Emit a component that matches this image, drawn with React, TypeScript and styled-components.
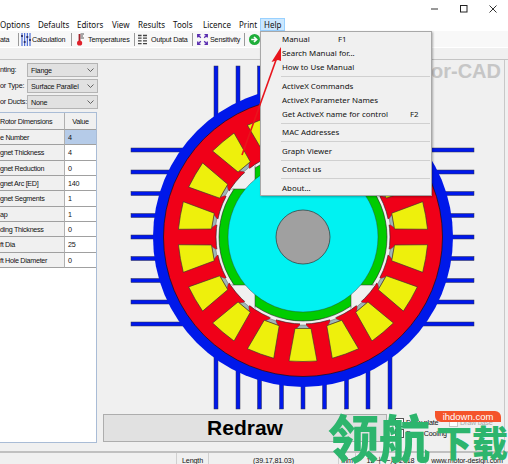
import React from "react";
import styled, { createGlobalStyle } from "styled-components";

const GlobalStyle = createGlobalStyle`
  html, body {
    margin: 0;
    padding: 0;
    background: #fff;
  }
`;

const menuFont = `"Noto Sans", "Liberation Sans", sans-serif`;
const uiFont = `"Liberation Sans", "Noto Sans CJK SC", sans-serif`;

const menus = [
  ["Options", 38],
  ["Defaults", 39],
  ["Editors", 35],
  ["View", 26],
  ["Results", 35],
  ["Tools", 30],
  ["Licence", 36],
  ["Print", 21],
] as const;

const rotorRows = [
  ["e Number", "4"],
  ["gnet Thickness", "4"],
  ["gnet Reduction", "0"],
  ["gnet Arc [ED]", "140"],
  ["gnet Segments", "1"],
  ["ap", "1"],
  ["ding Thickness", "0"],
  ["ft Dia", "25"],
  ["ft Hole Diameter", "0"],
];

const helpItems: { label: string; key?: string; keyAt?: number; gap: number }[] = [
  { label: "Manual", key: "F1", keyAt: 77, gap: 0 },
  { label: "Search Manual for...", gap: 0 },
  { label: "How to Use Manual", gap: 0 },
  { label: "ActiveX Commands", gap: 1 },
  { label: "ActiveX Parameter Names", gap: 0 },
  { label: "Get ActiveX name for control", key: "F2", keyAt: 149, gap: 0 },
  { label: "MAC Addresses", gap: 1 },
  { label: "Graph Viewer", gap: 1 },
  { label: "Contact us", gap: 1 },
  { label: "About...", gap: 1 },
];

const CX = 303;
const CY = 237;
const FIN_OFFSETS = [-87, -65, -43.5, -21.5, 0, 21.5, 43.5, 65, 87];
const SLOT_ANGLES = Array.from({ length: 18 }, (_, i) => i * 20);
const BG = "#f0f0f0";

const MotorDrawing = () => (
  <MotorSvg viewBox="97 60 408 350" width={408} height={350}>
    <defs>
      <clipPath id="gapClip">
        <circle cx={CX} cy={CY} r={86} />
      </clipPath>
    </defs>
    {FIN_OFFSETS.map((o) => (
      <g key={o} fill="#0018ea" stroke="#30304a" strokeWidth={0.5}>
        <rect x={CX + o - 2} y={66} width={4} height={343} />
        <rect x={131} y={CY + o - 2} width={343} height={4} />
      </g>
    ))}
    <circle cx={CX} cy={CY} r={150} fill="#0018ea" />
    <circle cx={CX} cy={CY} r={139.5} fill="#f00018" stroke="#111" strokeWidth={0.7} />
    <circle cx={CX} cy={CY} r={87} fill={BG} stroke="#222" strokeWidth={0.6} />
    {SLOT_ANGLES.map((a) => (
      <g key={a} transform={`rotate(${a} ${CX} ${CY}) translate(${CX} ${CY})`}>
        <path d="M-3 85.5 L3 85.5 L3 88.5 L-3 88.5 Z" fill={BG} />
        <path d="M-3 88 L3 88 L6.5 91.5 L-6.5 91.5 Z" fill="#9fb6b8" stroke="#555" strokeWidth={0.4} />
        <path
          d="M-8 91.5 L8 91.5 L14 124 Q0 125 -14 124 Z"
          fill="#eef00c"
          stroke="#333"
          strokeWidth={0.6}
        />
      </g>
    ))}
    <circle cx={CX} cy={CY} r={84} fill="#00cc00" stroke="#222" strokeWidth={0.6} />
    <g clipPath="url(#gapClip)" fill={BG} stroke="#333" strokeWidth={0.5}>
      <rect x={CX + 48} y={CY + 48} width={50} height={50} />
      <rect x={CX - 98} y={CY + 48} width={50} height={50} />
      <rect x={CX - 98} y={CY - 98} width={50} height={50} />
      <rect x={CX + 48} y={CY - 98} width={50} height={50} />
    </g>
    <circle cx={CX} cy={CY} r={75} fill="#00f2f2" stroke="#333" strokeWidth={0.4} />
    <circle cx={CX} cy={CY} r={27} fill="#a0a0a0" stroke="#333" strokeWidth={0.7} />
  </MotorSvg>
);

const CalcIcon = () => (
  <svg width={10} height={13} viewBox="0 0 10 13">
    <path d="M1 0v13M3.7 0v13M6.3 0v13M9 0v13" stroke="#2a52d0" strokeWidth={1} fill="none" />
    <path d="M0 3h2M2.7 9h2M5.3 4h2M8 7h2" stroke="#1a1a50" strokeWidth={1.6} fill="none" />
  </svg>
);

const ThermoIcon = () => (
  <svg width={7} height={13} viewBox="0 0 7 13">
    <path d="M2.5 1v7" stroke="#a02028" strokeWidth={1.8} fill="none" />
    <path d="M3.5 1h3.5M3.5 3h2.5M3.5 5h3.5" stroke="#444" strokeWidth={0.9} fill="none" />
    <circle cx={2.6} cy={10} r={2.6} fill="#e0202a" />
  </svg>
);

const GridIcon = () => (
  <svg width={9} height={11} viewBox="0 0 9 11">
    <path d="M0 1.5h3.6M5 1.5h4M0 4.2h3.6M5 4.2h4M0 6.9h3.6M5 6.9h4M0 9.6h3.6M5 9.6h4" stroke="#444" strokeWidth={1.3} fill="none" />
  </svg>
);

const SensitivityIcon = () => (
  <svg width={11} height={11} viewBox="0 0 11 11">
    <g stroke="#5b2fb0" strokeWidth={1.3} fill="none">
      <path d="M0.7 3.5v-2.8h2.8M1 1l2.8 2.8M10.3 3.5v-2.8h-2.8M10 1L7.2 3.8M0.7 7.5v2.8h2.8M1 10l2.8-2.8M10.3 7.5v2.8h-2.8M10 10L7.2 7.2" />
    </g>
  </svg>
);

const GoIcon = () => (
  <svg width={11} height={11} viewBox="0 0 11 11">
    <circle cx={5.5} cy={5.5} r={5.5} fill="#1fae3a" />
    <path d="M2.2 5.5h4.6M5 3l2.6 2.5L5 8" stroke="#fff" strokeWidth={1.7} fill="none" />
  </svg>
);

const Chevron = () => (
  <svg width={7} height={4} viewBox="0 0 7 4">
    <path d="M0.5 0.5L3.5 3.5 6.5 0.5" stroke="#555" strokeWidth={0.9} fill="none" />
  </svg>
);

const App = () => (
  <>
    <GlobalStyle />
    <Screen>
      <TitleBar>
        <WinButton>
          <svg width={8} height={8} viewBox="0 0 8 8"><path d="M0 4h7" stroke="#333" /></svg>
        </WinButton>
        <WinButton>
          <svg width={8} height={8} viewBox="0 0 8 8"><rect x={0.5} y={0.5} width={6.5} height={6.5} fill="none" stroke="#222" /></svg>
        </WinButton>
        <WinButton>
          <svg width={8} height={8} viewBox="0 0 8 8"><path d="M0.5 0.5l7 7M7.5 0.5l-7 7" stroke="#333" fill="none" /></svg>
        </WinButton>
      </TitleBar>

      <MenuBar>
        {menus.map(([label, width]) => (
          <MenuLabel key={label} $width={width}>{label}</MenuLabel>
        ))}
        <HelpLabel>Help</HelpLabel>
      </MenuBar>

      <Toolbar>
        <ToolTab $width={19} $pad={0} $gap={0}>ata</ToolTab>
        <ToolTab $width={53} $pad={2} $gap={1}><CalcIcon />Calculation</ToolTab>
        <ToolTab $width={63} $pad={5} $gap={4}><ThermoIcon />Temperatures</ToolTab>
        <ToolTab $width={58} $pad={3} $gap={4}><GridIcon />Output Data</ToolTab>
        <ToolTab $width={52} $pad={4} $gap={2}><SensitivityIcon />Sensitivity</ToolTab>
        <ToolTab $width={18} $pad={4} $gap={0}><GoIcon /></ToolTab>
      </Toolbar>

      <TabStrip />

      <Main>
        <Sidebar>
          <Field><FieldLabel>nting:</FieldLabel><Select>Flange<Chevron /></Select></Field>
          <Field><FieldLabel>or Type:</FieldLabel><Select>Surface Parallel<Chevron /></Select></Field>
          <Field><FieldLabel>or Ducts:</FieldLabel><Select>None<Chevron /></Select></Field>
          <Grid>
            <HeaderCell>Rotor Dimensions</HeaderCell>
            <HeaderCell $center>Value</HeaderCell>
            {rotorRows.map(([label, value], i) => (
              <React.Fragment key={label}>
                <LabelCell>{label}</LabelCell>
                <ValueCell $selected={i === 0}>{value}</ValueCell>
              </React.Fragment>
            ))}
          </Grid>
        </Sidebar>

        <Canvas>
          <MotorDrawing />
          <BrandText>Motor-CAD</BrandText>
          <BottomRow>
            <RedrawButton>Redraw</RedrawButton>
            <Options>
              <OptionRow>
                <Check /><OptionName>Draw plate</OptionName>
                <Check $off /><OffText>Draw base</OffText>
              </OptionRow>
              <OptionRow>
                <Check /><OptionName>Draw Cooling</OptionName>
              </OptionRow>
            </Options>
          </BottomRow>
        </Canvas>
      </Main>

      <StatusBar>
        <StatusCell $width={32}>Length</StatusCell>
        <StatusCell $width={130}>(39.17,81.03)</StatusCell>
        <StatusCell $width={17}>mm</StatusCell>
        <StatusCell $width={70}>12 十一月 2018</StatusCell>
        <StatusCell $width={83}>www.motor-design.com</StatusCell>
      </StatusBar>

      <HelpMenu>
        {helpItems.map((item) => (
          <React.Fragment key={item.label}>
            {item.gap > 0 && <MenuSeparator />}
            <HelpItem>
              {item.label}
              {item.key && <ShortcutKey $left={item.keyAt ?? 0}>{item.key}</ShortcutKey>}
            </HelpItem>
          </React.Fragment>
        ))}
      </HelpMenu>

      <ArrowOverlay width={60} height={130} viewBox="235 40 60 130">
        <path d="M242 155L276 60" stroke="#e8141c" strokeWidth={1.6} fill="none" />
        <path d="M281 47L271.5 62 278 60 281 61Z" fill="#e8141c" />
      </ArrowOverlay>

      <Watermark>
        <WatermarkBadge>ihdown.com</WatermarkBadge>
        <WatermarkBig>领航</WatermarkBig>
        <WatermarkSmall>下载</WatermarkSmall>
      </Watermark>
    </Screen>
  </>
);

export default App;

const Screen = styled.div`
  position: relative;
  width: 508px;
  height: 464px;
  overflow: hidden;
  display: flex;
  flex-direction: column;
  background: #fff;
  color: #111;
  font-family: ${uiFont};
  font-size: 7.2px;
  letter-spacing: -0.2px;
`;

const TitleBar = styled.div`
  height: 17px;
  display: flex;
  justify-content: flex-end;
  align-items: center;
  background: #fff;
`;

const WinButton = styled.div`
  width: 29px;
  height: 15px;
  display: flex;
  align-items: center;
  justify-content: center;
  &:last-child {
    margin-right: 1px;
  }
`;

const MenuBar = styled.div`
  height: 14px;
  display: flex;
  align-items: center;
  background: #fff;
  font-family: ${menuFont};
  font-size: 8px;
  letter-spacing: 0;
`;

const MenuLabel = styled.div<{ $width: number }>`
  width: ${(p) => p.$width}px;
  flex: none;
`;

const HelpLabel = styled.div`
  width: 25px;
  height: 13px;
  box-sizing: border-box;
  padding-left: 3px;
  line-height: 11px;
  background: #cce8ff;
  border: 1px solid #99d1ff;
`;

const Toolbar = styled.div`
  height: 16px;
  display: flex;
  align-items: center;
  background: #f8f8f8;
`;

const ToolTab = styled.div<{ $width: number; $pad: number; $gap: number }>`
  width: ${(p) => p.$width}px;
  height: 13px;
  flex: none;
  box-sizing: border-box;
  display: flex;
  align-items: center;
  gap: ${(p) => p.$gap}px;
  padding-left: ${(p) => p.$pad}px;
  border-right: 1px solid #9a9a9a;
  white-space: nowrap;
  &:last-child {
    border-right: none;
  }
`;

const TabStrip = styled.div`
  height: 13px;
  box-sizing: border-box;
  background: ${BG};
  border-top: 1px solid #fff;
  border-bottom: 1px solid #c4c4c4;
`;

const Main = styled.div`
  height: 391px;
  display: flex;
  background: ${BG};
`;

const Sidebar = styled.div`
  width: 97px;
  flex: none;
  display: flex;
  flex-direction: column;
  padding-top: 3px;
`;

const Field = styled.div`
  height: 16px;
  display: flex;
  align-items: flex-start;
`;

const FieldLabel = styled.div`
  width: 27px;
  flex: none;
  line-height: 14px;
  white-space: nowrap;
`;

const Select = styled.div`
  width: 71px;
  height: 14px;
  flex: none;
  box-sizing: border-box;
  display: flex;
  align-items: center;
  justify-content: space-between;
  padding: 0 3px 0 3px;
  background: #e1e1e1;
  border: 1px solid #b4b4b4;
  white-space: nowrap;
`;

const Grid = styled.div`
  margin-top: 1px;
  width: 97px;
  height: 331px;
  box-sizing: border-box;
  display: grid;
  grid-template-columns: 65px 31px;
  grid-template-rows: 17px repeat(9, 15.33px);
  align-content: start;
  background: #fff;
  border-top: 1px solid #a9bcd6;
  border-right: 1px solid #a9bcd6;
  border-bottom: 1px solid #a9bcd6;
  letter-spacing: -0.3px;
`;

const HeaderCell = styled.div<{ $center?: boolean }>`
  display: flex;
  align-items: center;
  justify-content: ${(p) => (p.$center ? "center" : "flex-start")};
  background: ${BG};
  border-right: 1px solid #b0b0b0;
  border-bottom: 1px solid #a0a0a0;
  white-space: nowrap;
  &:nth-child(2) {
    border-right: none;
  }
`;

const LabelCell = styled.div`
  display: flex;
  align-items: center;
  padding-top: 1px;
  background: ${BG};
  border-right: 1px solid #b0b0b0;
  border-bottom: 1px solid #a0a0a0;
  white-space: nowrap;
`;

const ValueCell = styled.div<{ $selected?: boolean }>`
  display: flex;
  align-items: center;
  padding: 1px 0 0 3px;
  background: ${(p) => (p.$selected ? "#b5cbe8" : "#fff")};
  border-bottom: 1px solid #a0a0a0;
`;

const Canvas = styled.div`
  position: relative;
  width: 408px;
  flex: none;
  box-sizing: border-box;
  display: flex;
  flex-direction: column;
  border-right: 1px solid #c8c8c8;
`;

const MotorSvg = styled.svg`
  display: block;
  flex: none;
`;

const BrandText = styled.div`
  position: absolute;
  top: 0;
  right: 3px;
  font-size: 20px;
  font-weight: 700;
  letter-spacing: 0;
  color: #c6c6c6;
`;

const BottomRow = styled.div`
  margin-top: 4px;
  padding-left: 6px;
  display: flex;
`;

const RedrawButton = styled.div`
  width: 284px;
  height: 28px;
  flex: none;
  box-sizing: border-box;
  display: flex;
  align-items: center;
  justify-content: center;
  background: #e1e1e1;
  border: 1px solid #adadad;
  color: #000;
  font-size: 21px;
  font-weight: 700;
  letter-spacing: 0;
`;

const Options = styled.div`
  margin-left: 8px;
  padding-top: 3px;
  flex: none;
  display: flex;
  flex-direction: column;
  gap: 1px;
`;

const OptionRow = styled.div`
  height: 10px;
  display: flex;
  align-items: center;
  gap: 2px;
  white-space: nowrap;
`;

const OptionName = styled.span`
  width: 40px;
`;

const Check = styled.div<{ $off?: boolean }>`
  width: 7px;
  height: 7px;
  flex: none;
  margin-left: ${(p) => (p.$off ? "1px" : "0")};
  background: #fff;
  border: 1px solid ${(p) => (p.$off ? "#c8c8c8" : "#555")};
`;

const OffText = styled.span`
  color: #a8a8a8;
`;

const StatusBar = styled.div`
  height: 13px;
  box-sizing: border-box;
  display: flex;
  justify-content: flex-end;
  align-items: stretch;
  background: ${BG};
  border-top: 2px solid #c0c0c0;
  letter-spacing: -0.15px;
`;

const StatusCell = styled.div<{ $width: number }>`
  width: ${(p) => p.$width}px;
  flex: none;
  box-sizing: border-box;
  display: flex;
  justify-content: center;
  align-items: center;
  padding-top: 3px;
  white-space: nowrap;
  border-left: 1px solid #d0d0d0;
`;

const HelpMenu = styled.div`
  position: absolute;
  left: 260px;
  top: 31px;
  width: 172px;
  height: 165px;
  box-sizing: border-box;
  background: ${BG};
  border: 1px solid #a8a8a8;
  box-shadow: 1px 1px 2px rgba(0, 0, 0, 0.3);
  font-family: ${menuFont};
  font-size: 7.9px;
  letter-spacing: 0;
`;

const HelpItem = styled.div`
  position: relative;
  height: 14px;
  line-height: 14px;
  padding-left: 21px;
  white-space: nowrap;
`;

const ShortcutKey = styled.span<{ $left: number }>`
  position: absolute;
  left: ${(p) => p.$left}px;
`;

const MenuSeparator = styled.div`
  height: 1px;
  margin: 2px 1px 1.5px 20px;
  background: #d0d0d0;
`;

const ArrowOverlay = styled.svg`
  position: absolute;
  left: 235px;
  top: 40px;
`;

const Watermark = styled.div`
  position: absolute;
  left: 328px;
  bottom: 0;
  width: 180px;
  height: 56px;
  display: flex;
  align-items: flex-end;
  color: #2db56d;
  font-family: "Noto Sans CJK SC", sans-serif;
  font-weight: 900;
  letter-spacing: 0;
  pointer-events: none;
`;

const WatermarkBadge = styled.div`
  position: absolute;
  top: 3px;
  left: 107px;
  width: 66px;
  height: 11px;
  border-radius: 0 6px 0 6px;
  display: flex;
  align-items: center;
  justify-content: center;
  background: #f4532b;
  color: #fff;
  font-family: "Liberation Sans", sans-serif;
  font-size: 9.5px;
  font-weight: 400;
`;

const WatermarkBig = styled.span`
  font-size: 51px;
  line-height: 56px;
`;

const WatermarkSmall = styled.span`
  font-size: 36px;
  line-height: 46px;
  margin-left: 6px;
`;
